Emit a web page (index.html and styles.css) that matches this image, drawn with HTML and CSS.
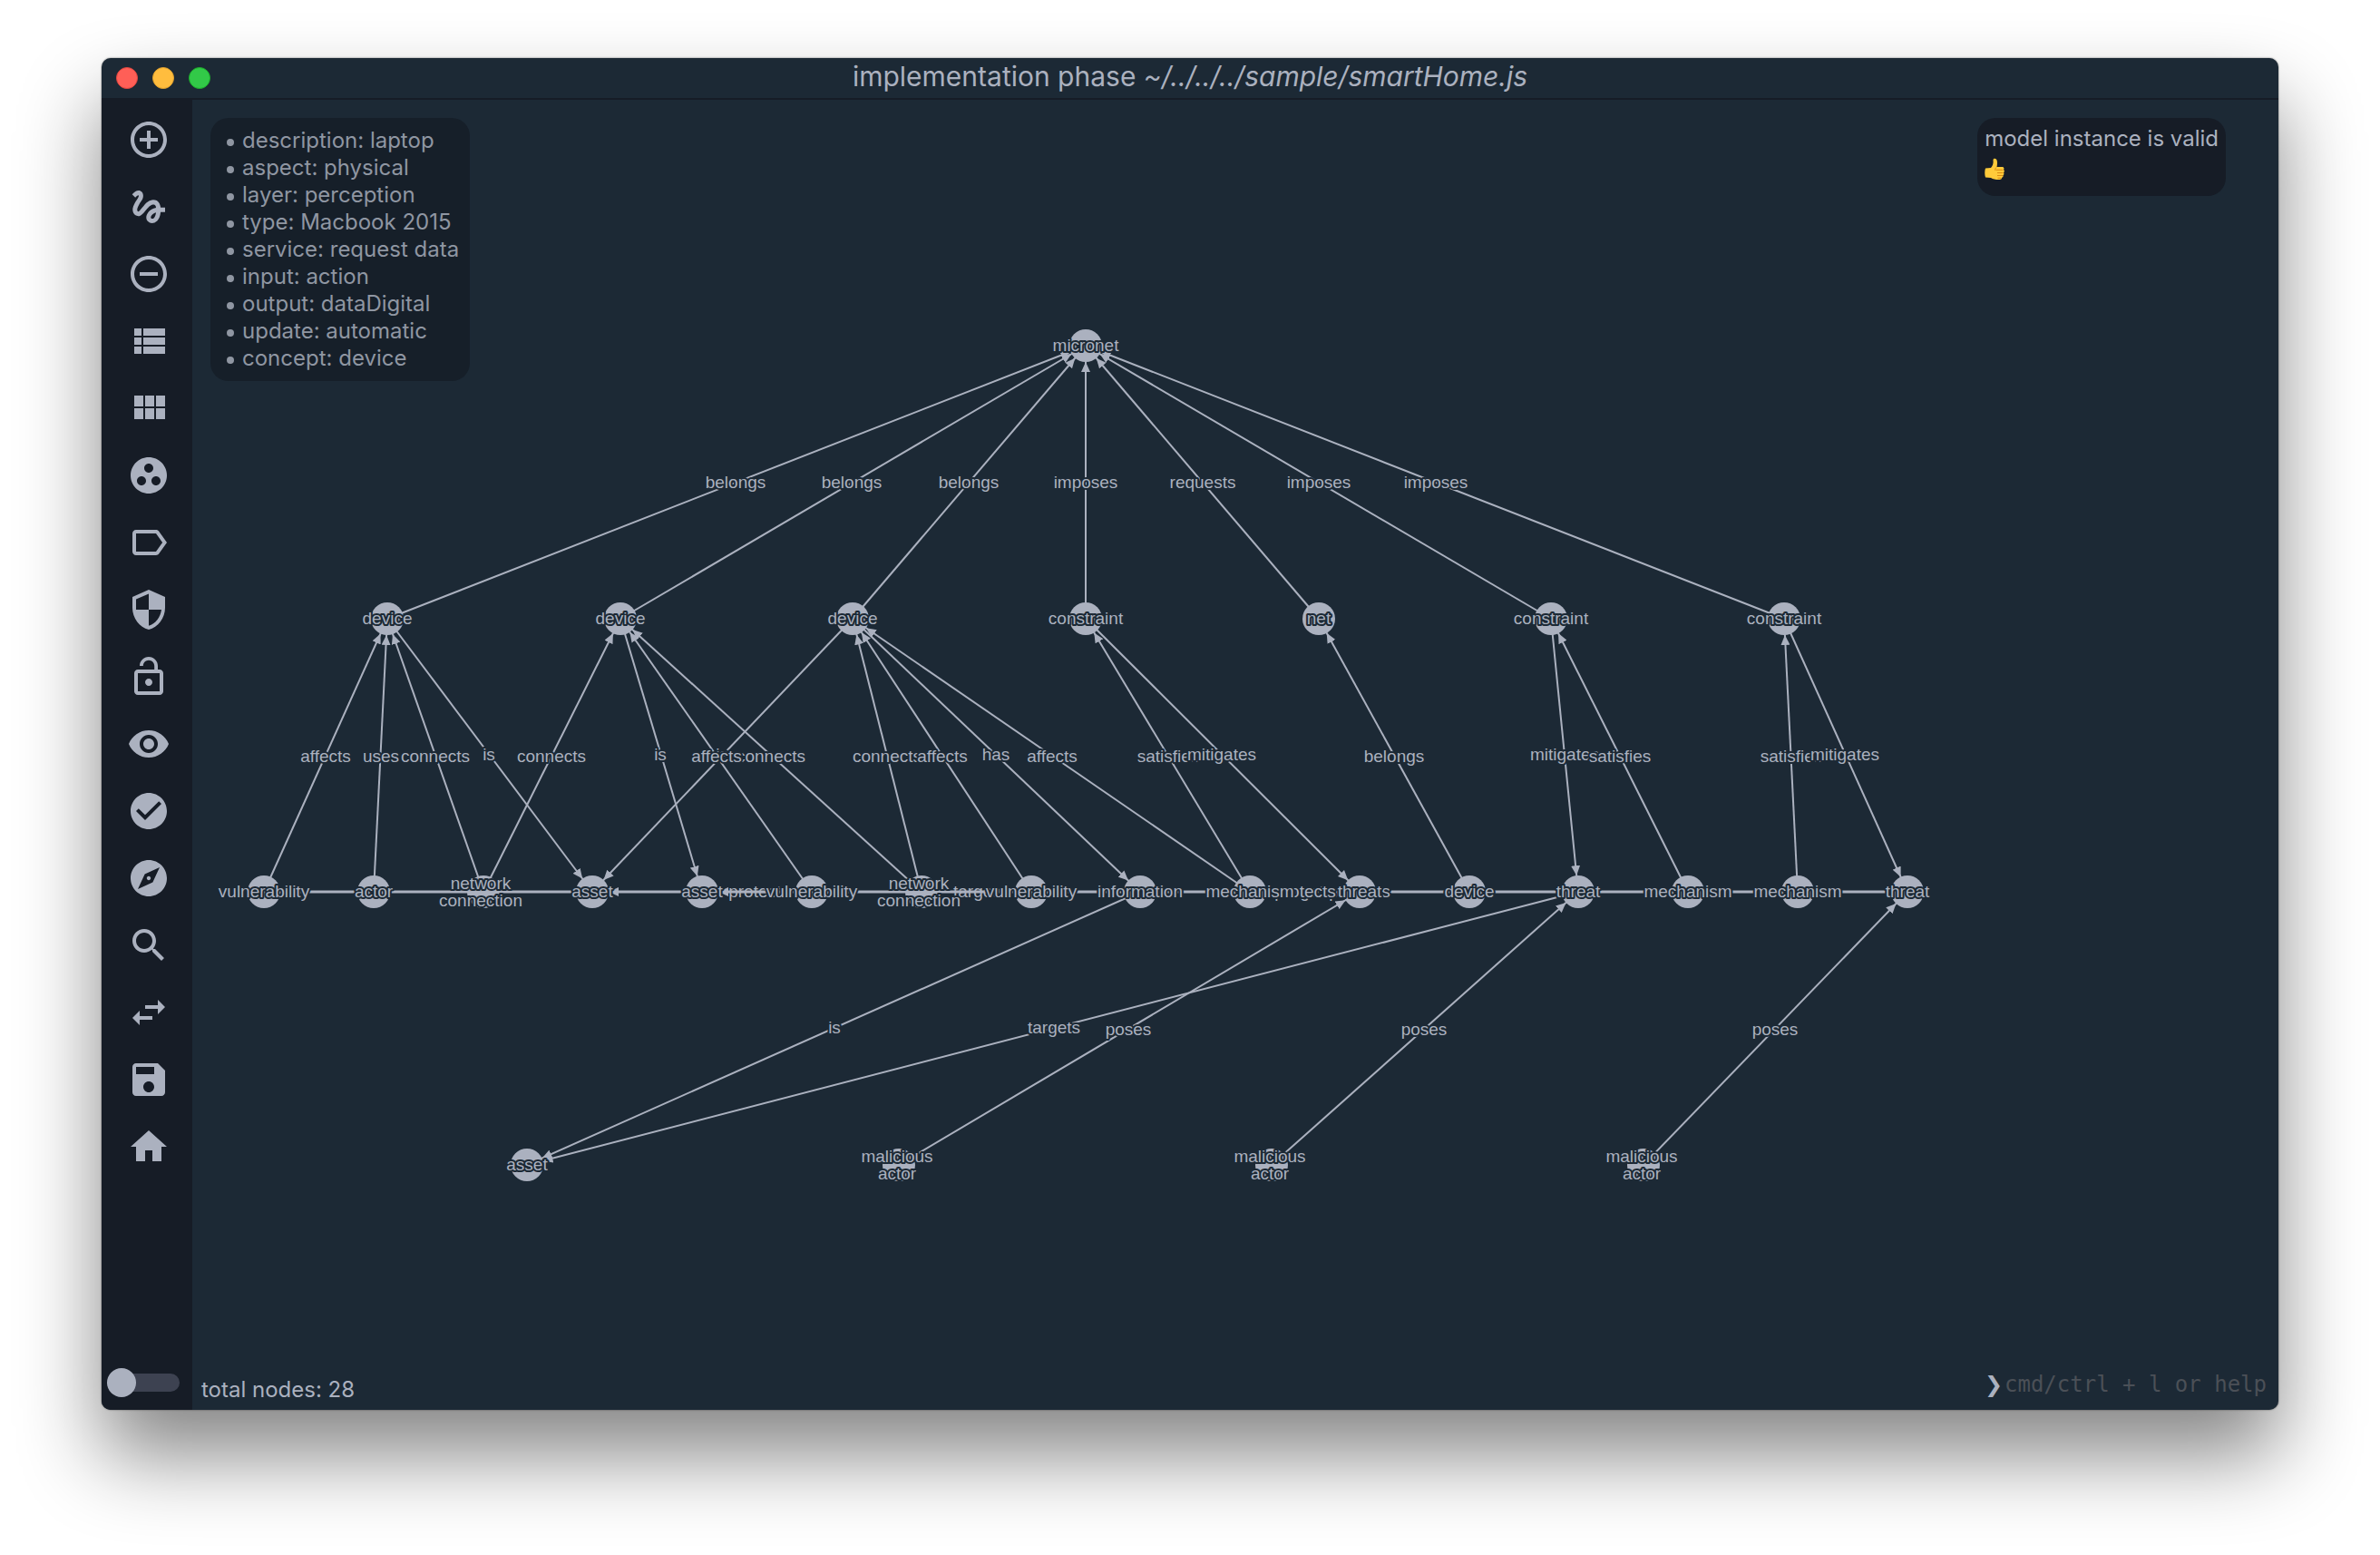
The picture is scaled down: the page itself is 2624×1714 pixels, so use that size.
FILE: index.html
```html
<!DOCTYPE html>
<html lang="en">
<head>
<meta charset="utf-8">
<title>implementation phase</title>
<link rel="stylesheet" href="styles.css">
</head>
<body>
<div class="window">
  <header class="titlebar">
    <div class="lights">
      <button class="light close" aria-label="Close"></button>
      <button class="light minimize" aria-label="Minimize"></button>
      <button class="light maximize" aria-label="Zoom"></button>
    </div>
    <h1 class="title">implementation phase <em>~/../../../sample/smartHome.js</em></h1>
  </header>
  <div class="workspace">
    <nav class="sidebar">
      <div class="tools">
        <button class="tool" aria-label="Add node"><svg viewBox="0 0 24 24"><path d="M13 7h-2v4H7v2h4v4h2v-4h4v-2h-4V7zm-1-5C6.480 2 2 6.480 2 12s4.480 10 10 10 10-4.480 10-10S17.520 2 12 2zm0 18c-4.410 0-8-3.590-8-8s3.590-8 8-8 8 3.590 8 8-3.590 8-8 8z"/></svg></button>
        <button class="tool" aria-label="Add edge"><svg viewBox="0 0 24 24"><path d="M4.590 6.890c.7-.71 1.400-1.350 1.710-1.220.5.2 0 1.030-.3 1.520-.25.42-2.860 3.890-2.860 6.310 0 1.280.48 2.340 1.340 2.980.75.56 1.740.73 2.640.46 1.070-.31 1.950-1.400 3.060-2.770 1.210-1.490 2.830-3.440 4.080-3.440 1.630 0 1.650 1.010 1.760 1.790-3.780.64-5.380 3.670-5.380 5.370 0 1.700 1.440 3.090 3.210 3.090 1.630 0 4.290-1.330 4.690-6.100H21v-2.500h-2.470c-.15-1.650-1.090-4.200-4.030-4.200-2.250 0-4.180 1.910-4.940 2.840-.58.73-2.060 2.480-2.290 2.720-.25.3-.68.84-1.110.84-.45 0-.72-.83-.36-1.920.35-1.090 1.400-2.860 1.850-3.520.78-1.140 1.300-1.920 1.300-3.280C8.950 3.690 7.310 3 6.440 3 5.120 3 3.970 4 3.720 4.250c-.36.36-.66.66-.88.93l1.750 1.710zm9.290 11.660c-.31 0-.74-.26-.74-.72 0-.6.73-2.200 2.870-2.760-.3 2.690-1.430 3.480-2.130 3.480z"/></svg></button>
        <button class="tool" aria-label="Remove"><svg viewBox="0 0 24 24"><path d="M7 11v2h10v-2H7zm5-9C6.480 2 2 6.480 2 12s4.480 10 10 10 10-4.480 10-10S17.520 2 12 2zm0 18c-4.410 0-8-3.590-8-8s3.590-8 8-8 8 3.590 8 8-3.590 8-8 8z"/></svg></button>
        <button class="tool" aria-label="List"><svg viewBox="0 0 24 24"><path d="M4 14h4v-4H4v4zm0 5h4v-4H4v4zM4 9h4V5H4v4zm5 5h12v-4H9v4zm0 5h12v-4H9v4zM9 5v4h12V5H9z"/></svg></button>
        <button class="tool" aria-label="Modules"><svg viewBox="0 0 24 24"><path d="M4 11h5V5H4v6zm0 7h5v-6H4v6zm6 0h5v-6h-5v6zm6 0h5v-6h-5v6zm-6-7h5V5h-5v6zm6-6v6h5V5h-5z"/></svg></button>
        <button class="tool" aria-label="Group"><svg viewBox="0 0 24 24"><path d="M12 2C6.480 2 2 6.480 2 12s4.480 10 10 10 10-4.480 10-10S17.520 2 12 2zM8 17.500c-1.380 0-2.500-1.120-2.500-2.500s1.120-2.500 2.500-2.500 2.500 1.120 2.500 2.500-1.120 2.500-2.500 2.500zM9.500 8c0-1.380 1.120-2.500 2.500-2.500s2.500 1.120 2.500 2.500-1.120 2.500-2.500 2.500S9.500 9.380 9.500 8zm6.500 9.500c-1.380 0-2.500-1.120-2.500-2.500s1.120-2.500 2.500-2.500 2.500 1.120 2.500 2.500-1.120 2.500-2.500 2.500z"/></svg></button>
        <button class="tool" aria-label="Label"><svg viewBox="0 0 24 24"><path d="M17.630 5.840C17.270 5.330 16.670 5 16 5L5 5.010C3.900 5.010 3 5.900 3 7v10c0 1.100.9 1.990 2 1.990L16 19c.67 0 1.270-.33 1.630-.84L22 12l-4.370-6.160zM16 17H5V7h11l3.550 5L16 17z"/></svg></button>
        <button class="tool" aria-label="Security"><svg viewBox="0 0 24 24"><path d="M12 1L3 5v6c0 5.550 3.840 10.740 9 12 5.160-1.260 9-6.450 9-12V5l-9-4zm0 10.990h7c-.53 4.120-3.280 7.790-7 8.940V12H5V6.300l7-3.110v8.800z"/></svg></button>
        <button class="tool" aria-label="Unlock"><svg viewBox="0 0 24 24"><path d="M12 17c1.100 0 2-.9 2-2s-.9-2-2-2-2 .9-2 2 .9 2 2 2zm6-9h-1V6c0-2.760-2.240-5-5-5S7 3.240 7 6h1.900c0-1.710 1.390-3.100 3.100-3.100 1.710 0 3.100 1.390 3.100 3.100v2H6c-1.100 0-2 .9-2 2v10c0 1.100.9 2 2 2h12c1.100 0 2-.9 2-2V10c0-1.100-.9-2-2-2zm0 12H6V10h12v10z"/></svg></button>
        <button class="tool" aria-label="Show"><svg viewBox="0 0 24 24"><path d="M12 4.500C7 4.500 2.730 7.610 1 12c1.730 4.390 6 7.500 11 7.500s9.270-3.110 11-7.500c-1.730-4.390-6-7.500-11-7.500zM12 17c-2.760 0-5-2.240-5-5s2.240-5 5-5 5 2.240 5 5-2.240 5-5 5zm0-8c-1.660 0-3 1.340-3 3s1.340 3 3 3 3-1.340 3-3-1.340-3-3-3z"/></svg></button>
        <button class="tool" aria-label="Validate"><svg viewBox="0 0 24 24"><path d="M12 2C6.480 2 2 6.480 2 12s4.480 10 10 10 10-4.480 10-10S17.520 2 12 2zm-2 15l-5-5 1.410-1.410L10 14.170l7.590-7.590L19 8l-9 9z"/></svg></button>
        <button class="tool" aria-label="Explore"><svg viewBox="0 0 24 24"><path d="M12 10.900c-.61 0-1.100.49-1.100 1.100s.49 1.100 1.100 1.100c.61 0 1.100-.49 1.100-1.100s-.49-1.100-1.100-1.100zM12 2C6.480 2 2 6.480 2 12s4.480 10 10 10 10-4.480 10-10S17.520 2 12 2zm2.190 12.190L6 18l3.810-8.190L18 6l-3.810 8.190z"/></svg></button>
        <button class="tool" aria-label="Search"><svg viewBox="0 0 24 24"><path d="M15.500 14h-.79l-.28-.27C15.410 12.590 16 11.110 16 9.500 16 5.910 13.090 3 9.500 3S3 5.910 3 9.500 5.910 16 9.500 16c1.610 0 3.090-.59 4.230-1.570l.27.28v.79l5 4.990L20.490 19l-4.990-5zm-6 0C7.010 14 5 11.990 5 9.500S7.010 5 9.500 5 14 7.010 14 9.500 11.990 14 9.500 14z"/></svg></button>
        <button class="tool" aria-label="Swap phase"><svg viewBox="0 0 24 24"><path d="M6.990 11L3 15l3.990 4v-3H14v-2H6.990v-3zM21 9l-3.990-4v3H10v2h7.010v3L21 9z"/></svg></button>
        <button class="tool" aria-label="Save"><svg viewBox="0 0 24 24"><path d="M17 3H5c-1.110 0-2 .9-2 2v14c0 1.100.89 2 2 2h14c1.100 0 2-.9 2-2V7l-4-4zm-5 16c-1.660 0-3-1.340-3-3s1.340-3 3-3 3 1.340 3 3-1.340 3-3 3zm3-10H5V5h10v4z"/></svg></button>
        <button class="tool" aria-label="Home"><svg viewBox="0 0 24 24"><path d="M10 20v-6h4v6h5v-8h3L12 3 2 12h3v8z"/></svg></button>
      </div>
      <input class="switch" type="checkbox" aria-label="Toggle side panel">
    </nav>
    <main class="stage">
      <svg class="graph" viewBox="212 110 2300 1444" role="img" aria-label="Model graph">
        <defs>
          <marker id="arrow" viewBox="0 0 11 10" refX="29" refY="5" markerWidth="11" markerHeight="10" markerUnits="userSpaceOnUse" orient="auto"><path class="tip" d="M0 0L11 5L0 10z"/></marker>
        </defs>
        <g class="edge-label">
          <text x="837" y="989">protects</text>
          <text x="1080" y="989">targets</text>
        </g>
        <g class="edge">
          <path class="wide" d="M291 983H2103"/>
          <path d="M774 983H653"/><path d="M895 983H774"/><path d="M1620 983H1499"/><path d="M1257 983H1137"/>
          <path d="M427 682L1197 381"/><path d="M684 682L1197 381"/><path d="M940 682L1197 381"/><path d="M1197 682V381"/>
          <path d="M1454 682L1197 381"/><path d="M1710 682L1197 381"/><path d="M1967 682L1197 381"/>
          <path d="M291 983L427 682"/><path d="M412 983L427 682"/><path d="M533 983L427 682"/><path d="M427 682L653 983"/>
          <path d="M533 983L684 682"/><path d="M684 682L774 983"/><path d="M895 983L684 682"/><path d="M1016 983L684 682"/>
          <path d="M940 682L653 983"/><path d="M1016 983L940 682"/><path d="M1137 983L940 682"/><path d="M940 682L1257 983"/>
          <path d="M1378 983L940 682"/><path d="M1378 983L1197 682"/><path d="M1197 682L1499 983"/><path d="M1620 983L1454 682"/>
          <path d="M1710 682L1740 983"/><path d="M1861 983L1710 682"/><path d="M1982 983L1967 682"/><path d="M1967 682L2103 983"/>
          <path d="M1257 983L581 1284"/><path d="M1740 983L581 1284"/>
          <path d="M991 1284L1499 983"/><path d="M1402 1284L1740 983"/><path d="M1812 1284L2103 983"/>
        </g>
        <g class="edge-label">
          <text x="811" y="538">belongs</text><text x="939" y="538">belongs</text><text x="1068" y="538">belongs</text>
          <text x="1197" y="538">imposes</text><text x="1326" y="538">requests</text><text x="1454" y="538">imposes</text><text x="1583" y="538">imposes</text>
          <text x="359" y="840">affects</text><text x="420" y="840">uses</text><text x="480" y="840">connects</text><text x="539" y="838">is</text>
          <text x="608" y="840">connects</text><text x="728" y="838">is</text><text x="796" y="838">is</text>
          <text x="850" y="840">connects</text><text x="790" y="840">affects</text>
          <text x="978" y="840">connects</text><text x="1039" y="840">affects</text><text x="1098" y="838">has</text><text x="1160" y="840">affects</text>
          <text x="1288" y="840">satisfies</text><text x="1347" y="838">mitigates</text><text x="1537" y="840">belongs</text>
          <text x="1725" y="838">mitigates</text><text x="1786" y="840">satisfies</text>
          <text x="1975" y="840">satisfies</text><text x="2034" y="838">mitigates</text>
          <text x="920" y="1139">is</text><text x="1162" y="1139">targets</text><text x="1244" y="1141">poses</text><text x="1570" y="1141">poses</text><text x="1957" y="1141">poses</text>
          <text x="1440" y="989">targets</text><text x="1499" y="989">protects</text><text x="1439" y="989">protects</text>
        </g>
        <g class="node">
          <circle cx="1197" cy="381" r="18"/>
          <circle cx="427" cy="682" r="18"/><circle cx="684" cy="682" r="18"/><circle cx="940" cy="682" r="18"/><circle cx="1197" cy="682" r="18"/><circle cx="1454" cy="682" r="18"/><circle cx="1710" cy="682" r="18"/><circle cx="1967" cy="682" r="18"/>
          <circle cx="291" cy="983" r="18"/><circle cx="412" cy="983" r="18"/><circle cx="533" cy="983" r="18"/><circle cx="653" cy="983" r="18"/><circle cx="774" cy="983" r="18"/><circle cx="895" cy="983" r="18"/><circle cx="1016" cy="983" r="18"/><circle cx="1137" cy="983" r="18"/><circle cx="1257" cy="983" r="18"/><circle cx="1378" cy="983" r="18"/><circle cx="1499" cy="983" r="18"/><circle cx="1620" cy="983" r="18"/><circle cx="1740" cy="983" r="18"/><circle cx="1861" cy="983" r="18"/><circle cx="1982" cy="983" r="18"/><circle cx="2103" cy="983" r="18"/>
          <circle cx="581" cy="1284" r="18"/><circle cx="991" cy="1284" r="18"/><circle cx="1402" cy="1284" r="18"/><circle cx="1812" cy="1284" r="18"/>
        </g>
        <g class="node-label">
          <text x="1197" y="387">micronet</text>
          <text x="427" y="688">device</text><text x="684" y="688">device</text><text x="940" y="688">device</text><text x="1197" y="688">constraint</text><text x="1454" y="688">net</text><text x="1710" y="688">constraint</text><text x="1967" y="688">constraint</text>
          <text x="291" y="989">vulnerability</text><text x="412" y="989">actor</text>
          <text x="530" y="980">network</text><text x="530" y="999">connection</text>
          <text x="653" y="989">asset</text><text x="774" y="989">asset</text><text x="895" y="989">vulnerability</text>
          <text x="1013" y="980">network</text><text x="1013" y="999">connection</text>
          <text x="1137" y="989">vulnerability</text><text x="1257" y="989">information</text><text x="1378" y="989">mechanism</text><text x="1499" y="989">threat</text><text x="1620" y="989">device</text><text x="1740" y="989">threat</text><text x="1861" y="989">mechanism</text><text x="1982" y="989">mechanism</text><text x="2103" y="989">threat</text>
          <text x="581" y="1290">asset</text>
          <text x="989" y="1281">malicious</text><text x="989" y="1300">actor</text>
          <text x="1400" y="1281">malicious</text><text x="1400" y="1300">actor</text>
          <text x="1810" y="1281">malicious</text><text x="1810" y="1300">actor</text>
        </g>
      </svg>
      <div class="panels">
        <ul class="panel details">
          <li>description: laptop</li>
          <li>aspect: physical</li>
          <li>layer: perception</li>
          <li>type: Macbook 2015</li>
          <li>service: request data</li>
          <li>input: action</li>
          <li>output: dataDigital</li>
          <li>update: automatic</li>
          <li>concept: device</li>
        </ul>
        <div class="panel notice">
          <p class="message">model instance is valid</p>
          <svg class="thumb" viewBox="0 0 24 26" aria-label="thumbs up"><path fill="#ffca3a" d="M1 11.500L7 11C9 9 10 6 9.500 2.500 9.500.5 11.500 0 13 1.500c1.500 2 1 6 .5 8.500h6c2 0 2.500 2 1.500 3 1.200.8 1 2.500 0 3.200.8 1 .4 2.400-.6 3 .5 1.200-.2 2.300-1.400 2.600 0 1.400-1 2.200-2.500 2.200-3.500.2-7-.5-9.500-2L1 21.500C0 19 0 14 1 11.500z"/><path fill="none" stroke="#d98a12" stroke-width="1" d="M13 13.300h7.500M14 16.500h6.500M14 19.500h6M14.500 22.300h3.500M13 10.500c-1 1-1.500 2-1 3.500"/></svg>
        </div>
      </div>
      <footer class="status">
        <p class="total">total nodes: 28</p>
        <label class="prompt"><span class="caret">❯</span><input class="command" type="text" placeholder="cmd/ctrl + l or help"></label>
      </footer>
    </main>
  </div>
</div>
</body>
</html>
```
FILE: styles.css
```css
:root {
  --ink: #abb1bf;
  --canvas: #1c2935;
  --shade: #161c26;
}

* { box-sizing: border-box; margin: 0; }

body {
  padding: 64px 112px 160px;
  background: #fff;
  color: var(--ink);
  font-family: Inter, "Liberation Sans", sans-serif;
  font-size: 24px;
}

button { border: 0; padding: 0; background: none; color: inherit; }

.window {
  display: flex;
  flex-direction: column;
  border-radius: 10px;
  overflow: hidden;
  background: var(--canvas);
  box-shadow: 0 0 2px rgba(0, 0, 0, .6), 0 50px 90px rgba(0, 0, 0, .48);
}

.titlebar {
  display: grid;
  grid-template-columns: 1fr auto 1fr;
  align-items: center;
  height: 46px;
  padding: 0 16px;
  border-bottom: 2px solid var(--shade);
}
.lights { display: flex; gap: 16px; }
.light { width: 24px; height: 24px; border-radius: 50%; border: 1px solid; }
.close { background: #ff5f57; border-color: #e2463f; }
.minimize { background: #ffbd3e; border-color: #e0a02c; }
.maximize { background: #32c948; border-color: #1dad2b; }
.title { font-size: 30px; line-height: 40px; font-weight: 400; padding-bottom: 4px; }

.workspace { display: flex; }

.sidebar {
  display: flex;
  flex-direction: column;
  justify-content: space-between;
  width: 100px;
  padding: 20px 6px 14px;
  background: var(--shade);
}
.tools { display: flex; flex-direction: column; gap: 26px; padding-left: 22px; }
.tool { width: 48px; height: 48px; }
.tool svg { display: block; width: 48px; height: 48px; fill: currentColor; }

.switch {
  appearance: none;
  display: grid;
  align-items: center;
  width: 80px;
  height: 32px;
}
.switch::before {
  content: "";
  grid-area: 1 / 1;
  height: 20px;
  border-radius: 10px;
  background: #3d4251;
}
.switch::after {
  content: "";
  grid-area: 1 / 1;
  width: 32px;
  height: 32px;
  border-radius: 50%;
  background: var(--ink);
}
.switch:checked::after { justify-self: end; }

.stage { flex: 1; display: grid; min-width: 0; }
.graph { grid-area: 1 / 1; display: block; width: 100%; }
.edge { fill: none; stroke: var(--ink); stroke-width: 2; }
.edge path { marker-end: url(#arrow); }
.edge .wide { stroke-width: 3; marker-end: none; }
.tip, .node { fill: var(--ink); stroke: none; }
.graph text {
  font-family: "Liberation Sans", Arial, sans-serif;
  font-size: 19px;
  text-anchor: middle;
  fill: var(--ink);
  stroke: var(--canvas);
  stroke-width: 4px;
  stroke-linejoin: round;
  paint-order: stroke;
}

.panels {
  grid-area: 1 / 1;
  align-self: start;
  display: flex;
  justify-content: space-between;
  align-items: flex-start;
  padding: 20px 58px 0 20px;
}
.panel { border-radius: 20px; background: #161f29; }
.details {
  padding: 10px 12px 10px 18px;
  line-height: 30px;
  color: #8f96a2;
  list-style: none;
}
.details li { display: flex; align-items: center; gap: 9px; }
.details li::before {
  content: "";
  width: 8px;
  height: 8px;
  margin-top: 3px;
  border-radius: 50%;
  background: currentColor;
}
.notice { padding: 6px 8px 16px; background: var(--shade); }
.message { line-height: 34px; }
.thumb { display: block; width: 24px; height: 26px; margin-top: 4px; }

.status {
  grid-area: 1 / 1;
  align-self: end;
  display: flex;
  justify-content: space-between;
  align-items: flex-end;
  padding: 0 10px 2px;
}
.total { line-height: 40px; }
.prompt { display: flex; align-items: center; padding-bottom: 10px; }
.caret { width: 22px; font-family: "DejaVu Sans", sans-serif; font-size: 24px; line-height: 32px; }
.command {
  width: 292px;
  border: 0;
  padding: 0;
  background: none;
  color: var(--ink);
  font-family: "DejaVu Sans Mono", monospace;
  font-size: 24px;
  line-height: 32px;
  outline: 0;
}
.command::placeholder { color: #4b5057; }
```
